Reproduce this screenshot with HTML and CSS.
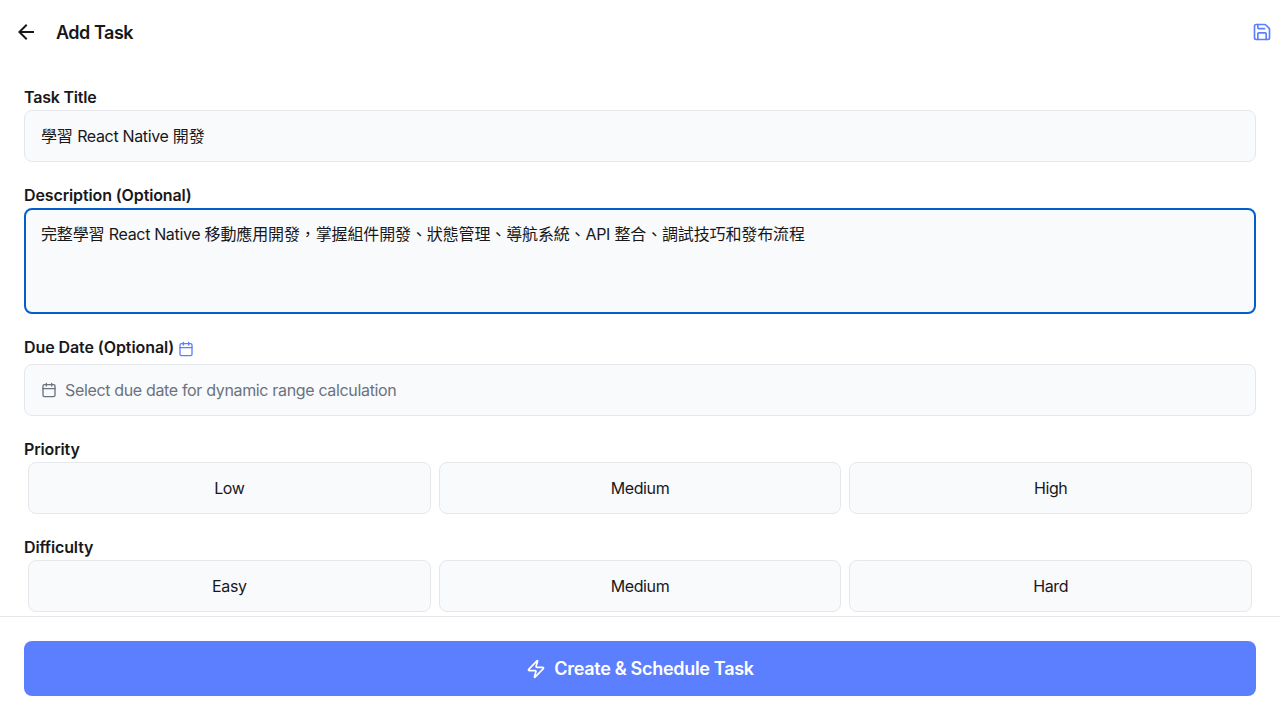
FILE: index.html
```html
<!DOCTYPE html>
<html lang="zh-Hant">
<head>
<meta charset="utf-8">
<title>Add Task</title>
<link rel="stylesheet" href="styles.css">
</head>
<body>
<div class="screen">
  <header class="header">
    <svg class="back" width="24" height="24" viewBox="0 0 24 24" fill="currentColor"><path d="M20 11H7.83l5.59-5.59L12 4l-8 8 8 8 1.41-1.41L7.83 13H20v-2z"/></svg>
    <h1 class="title">Add Task</h1>
    <svg class="save" width="20" height="20" viewBox="0 0 24 24" fill="none" stroke="currentColor" stroke-width="2" stroke-linecap="round" stroke-linejoin="round"><path d="M15.2 3a2 2 0 0 1 1.4.6l3.8 3.8a2 2 0 0 1 .6 1.4V19a2 2 0 0 1-2 2H5a2 2 0 0 1-2-2V5a2 2 0 0 1 2-2z"/><path d="M17 21v-7a1 1 0 0 0-1-1H8a1 1 0 0 0-1 1v7"/><path d="M7 3v4a1 1 0 0 0 1 1h7"/></svg>
  </header>
  <main class="form">
    <section class="field">
      <div class="label"><span class="label-task">Task Title</span></div>
      <div class="input cjk">學習 <span class="latin">React Native</span> 開發</div>
    </section>
    <section class="field">
      <div class="label"><span class="label-desc">Description (Optional)</span></div>
      <div class="input textarea cjk">完整學習 <span class="latin">React Native</span> 移動應用開發，掌握組件開發、狀態管理、導航系統、<span class="latin">API</span> 整合、調試技巧和發布流程</div>
    </section>
    <section class="field">
      <div class="label label-date"><span class="label-due">Due Date (Optional)</span>
        <svg class="cal" width="16" height="16" viewBox="0 0 24 24" fill="none" stroke="currentColor" stroke-width="2" stroke-linecap="round" stroke-linejoin="round"><path d="M8 2v4M16 2v4M3 10h18"/><rect x="3" y="4" width="18" height="18" rx="2"/></svg>
      </div>
      <div class="input date">
        <svg width="16" height="16" viewBox="0 0 24 24" fill="none" stroke="currentColor" stroke-width="2" stroke-linecap="round" stroke-linejoin="round"><path d="M8 2v4M16 2v4M3 10h18"/><rect x="3" y="4" width="18" height="18" rx="2"/></svg>
        <span class="placeholder">Select due date for dynamic range calculation</span>
      </div>
    </section>
    <section class="field">
      <div class="label"><span class="label-short">Priority</span></div>
      <div class="options"><div class="option">Low</div><div class="option">Medium</div><div class="option">High</div></div>
    </section>
    <section class="field">
      <div class="label"><span class="label-short">Difficulty</span></div>
      <div class="options"><div class="option">Easy</div><div class="option">Medium</div><div class="option">Hard</div></div>
    </section>
  </main>
  <footer class="footer">
    <div class="submit">
      <svg width="20" height="20" viewBox="0 0 24 24" fill="none" stroke="currentColor" stroke-width="2" stroke-linecap="round" stroke-linejoin="round"><path d="M4 14a1 1 0 0 1-.78-1.63l9.9-10.2a.5.5 0 0 1 .86.46l-1.92 6.02A1 1 0 0 0 13 10h7a1 1 0 0 1 .78 1.63l-9.9 10.2a.5.5 0 0 1-.86-.46l1.92-6.02A1 1 0 0 0 11 14z"/></svg>
      <span class="submit-text">Create &amp; Schedule Task</span>
    </div>
  </footer>
</div>
</body>
</html>
```
FILE: styles.css
```css
* { box-sizing: border-box; }
body {
  margin: 0;
  background: #fff;
  color: #18181b;
  font: 16px/24px Inter, "Noto Sans CJK TC", sans-serif;
}
.screen { display: flex; flex-direction: column; height: 720px; overflow: hidden; }
.header { display: flex; align-items: center; flex: none; height: 64px; padding: 0 8px 0 14px; }
.back { flex: none; margin-right: 18px; }
.title { flex: 1; margin: 0; padding-top: 2px; font-size: 18px; font-weight: 600; letter-spacing: -0.47px; }
.save { color: #5b7fff; }
.form { display: flex; flex: 1; flex-direction: column; gap: 22px; min-height: 0; padding: 22px 24px 0; overflow: hidden; }
.field { flex: none; }
.label { display: flex; align-items: center; height: 24px; padding-bottom: 2px; font-weight: 600; white-space: nowrap; }
.label-task { letter-spacing: -0.2px; }
.label-desc { letter-spacing: -0.12px; }
.label-due { letter-spacing: -0.08px; }
.label-short { letter-spacing: -0.15px; }
.label-date { gap: 4px; margin-bottom: 4px; }
.cal { margin-top: 4px; color: #5b7fff; }
.input { height: 52px; padding: 13px 16px; border: 1px solid #e5e7eb; border-radius: 8px; background: #f9fafc; white-space: nowrap; }
.textarea { height: 106px; padding: 12px 15px; border: 2px solid #005fcc; }
.cjk { letter-spacing: -0.13px; }
.latin { letter-spacing: -0.35px; }
.date { display: flex; align-items: center; gap: 8px; color: #6b7280; }
.placeholder { letter-spacing: -0.34px; }
.options { display: flex; gap: 8px; padding: 0 4px; }
.option { flex: 1; height: 52px; border: 1px solid #e5e7eb; border-radius: 8px; background: #f9fafc; line-height: 51px; letter-spacing: -0.4px; text-align: center; }
.footer { flex: none; height: 104px; padding: 24px; border-top: 1px solid #e5e7eb; background: #fff; }
.submit { display: flex; align-items: center; justify-content: center; gap: 8px; height: 55px; border-radius: 8px; background: #5b7fff; color: #fff; }
.submit-text { font-size: 18px; font-weight: 600; letter-spacing: -0.3px; }
```
